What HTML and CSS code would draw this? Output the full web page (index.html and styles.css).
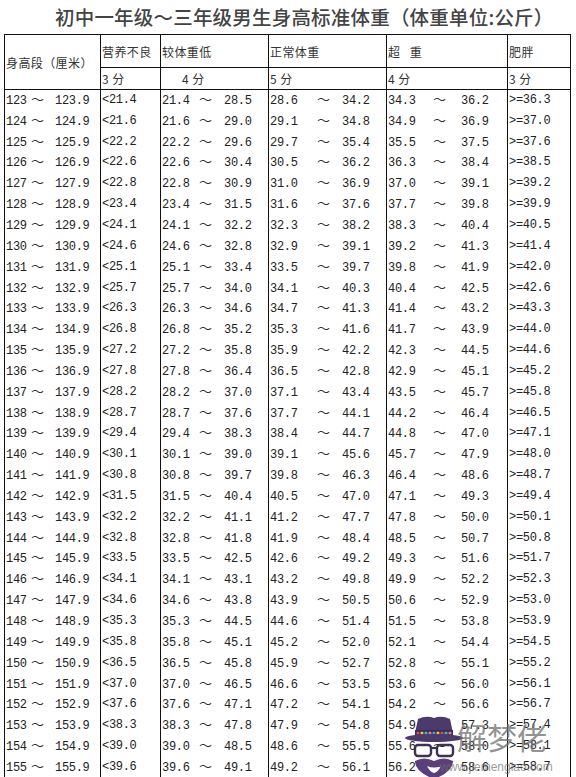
FILE: index.html
```html
<!DOCTYPE html>
<html lang="zh-CN">
<head>
<meta charset="utf-8">
<title>初中一年级～三年级男生身高标准体重</title>
<link rel="stylesheet" href="styles.css">
</head>
<body>
<div class="page">
  <h1 class="title">初中一年级～三年级男生身高标准体重（体重单位:公斤）</h1>
  <table class="chart">
    <colgroup>
      <col class="w1"><col class="w2"><col class="w3"><col class="w4"><col class="w5"><col class="w6">
    </colgroup>
    <thead>
      <tr class="h1">
        <th rowspan="2" class="hd">身高段（厘米）</th>
        <th class="hd">营养不良</th>
        <th class="hd">较体重低</th>
        <th class="hd">正常体重</th>
        <th class="hd">超&nbsp;&nbsp;&nbsp;重</th>
        <th class="hd">肥胖</th>
      </tr>
      <tr class="h2">
        <th class="hd">3 分</th>
        <th class="hd indent">4 分</th>
        <th class="hd">5 分</th>
        <th class="hd">4 分</th>
        <th class="hd">3 分</th>
      </tr>
    </thead>
    <tbody>
      <tr><td class="c1"><span class="a">123</span><span class="t">～</span>123.9</td><td>&lt;21.4</td><td class="c3"><span class="a">21.4</span><span class="t">～</span>28.5</td><td class="c4"><span class="a">28.6</span><span class="t">～</span>34.2</td><td class="c5"><span class="a">34.3</span><span class="t">～</span>36.2</td><td>&gt;=36.3</td></tr>
      <tr><td class="c1"><span class="a">124</span><span class="t">～</span>124.9</td><td>&lt;21.6</td><td class="c3"><span class="a">21.6</span><span class="t">～</span>29.0</td><td class="c4"><span class="a">29.1</span><span class="t">～</span>34.8</td><td class="c5"><span class="a">34.9</span><span class="t">～</span>36.9</td><td>&gt;=37.0</td></tr>
      <tr><td class="c1"><span class="a">125</span><span class="t">～</span>125.9</td><td>&lt;22.2</td><td class="c3"><span class="a">22.2</span><span class="t">～</span>29.6</td><td class="c4"><span class="a">29.7</span><span class="t">～</span>35.4</td><td class="c5"><span class="a">35.5</span><span class="t">～</span>37.5</td><td>&gt;=37.6</td></tr>
      <tr><td class="c1"><span class="a">126</span><span class="t">～</span>126.9</td><td>&lt;22.6</td><td class="c3"><span class="a">22.6</span><span class="t">～</span>30.4</td><td class="c4"><span class="a">30.5</span><span class="t">～</span>36.2</td><td class="c5"><span class="a">36.3</span><span class="t">～</span>38.4</td><td>&gt;=38.5</td></tr>
      <tr><td class="c1"><span class="a">127</span><span class="t">～</span>127.9</td><td>&lt;22.8</td><td class="c3"><span class="a">22.8</span><span class="t">～</span>30.9</td><td class="c4"><span class="a">31.0</span><span class="t">～</span>36.9</td><td class="c5"><span class="a">37.0</span><span class="t">～</span>39.1</td><td>&gt;=39.2</td></tr>
      <tr><td class="c1"><span class="a">128</span><span class="t">～</span>128.9</td><td>&lt;23.4</td><td class="c3"><span class="a">23.4</span><span class="t">～</span>31.5</td><td class="c4"><span class="a">31.6</span><span class="t">～</span>37.6</td><td class="c5"><span class="a">37.7</span><span class="t">～</span>39.8</td><td>&gt;=39.9</td></tr>
      <tr><td class="c1"><span class="a">129</span><span class="t">～</span>129.9</td><td>&lt;24.1</td><td class="c3"><span class="a">24.1</span><span class="t">～</span>32.2</td><td class="c4"><span class="a">32.3</span><span class="t">～</span>38.2</td><td class="c5"><span class="a">38.3</span><span class="t">～</span>40.4</td><td>&gt;=40.5</td></tr>
      <tr><td class="c1"><span class="a">130</span><span class="t">～</span>130.9</td><td>&lt;24.6</td><td class="c3"><span class="a">24.6</span><span class="t">～</span>32.8</td><td class="c4"><span class="a">32.9</span><span class="t">～</span>39.1</td><td class="c5"><span class="a">39.2</span><span class="t">～</span>41.3</td><td>&gt;=41.4</td></tr>
      <tr><td class="c1"><span class="a">131</span><span class="t">～</span>131.9</td><td>&lt;25.1</td><td class="c3"><span class="a">25.1</span><span class="t">～</span>33.4</td><td class="c4"><span class="a">33.5</span><span class="t">～</span>39.7</td><td class="c5"><span class="a">39.8</span><span class="t">～</span>41.9</td><td>&gt;=42.0</td></tr>
      <tr><td class="c1"><span class="a">132</span><span class="t">～</span>132.9</td><td>&lt;25.7</td><td class="c3"><span class="a">25.7</span><span class="t">～</span>34.0</td><td class="c4"><span class="a">34.1</span><span class="t">～</span>40.3</td><td class="c5"><span class="a">40.4</span><span class="t">～</span>42.5</td><td>&gt;=42.6</td></tr>
      <tr><td class="c1"><span class="a">133</span><span class="t">～</span>133.9</td><td>&lt;26.3</td><td class="c3"><span class="a">26.3</span><span class="t">～</span>34.6</td><td class="c4"><span class="a">34.7</span><span class="t">～</span>41.3</td><td class="c5"><span class="a">41.4</span><span class="t">～</span>43.2</td><td>&gt;=43.3</td></tr>
      <tr><td class="c1"><span class="a">134</span><span class="t">～</span>134.9</td><td>&lt;26.8</td><td class="c3"><span class="a">26.8</span><span class="t">～</span>35.2</td><td class="c4"><span class="a">35.3</span><span class="t">～</span>41.6</td><td class="c5"><span class="a">41.7</span><span class="t">～</span>43.9</td><td>&gt;=44.0</td></tr>
      <tr><td class="c1"><span class="a">135</span><span class="t">～</span>135.9</td><td>&lt;27.2</td><td class="c3"><span class="a">27.2</span><span class="t">～</span>35.8</td><td class="c4"><span class="a">35.9</span><span class="t">～</span>42.2</td><td class="c5"><span class="a">42.3</span><span class="t">～</span>44.5</td><td>&gt;=44.6</td></tr>
      <tr><td class="c1"><span class="a">136</span><span class="t">～</span>136.9</td><td>&lt;27.8</td><td class="c3"><span class="a">27.8</span><span class="t">～</span>36.4</td><td class="c4"><span class="a">36.5</span><span class="t">～</span>42.8</td><td class="c5"><span class="a">42.9</span><span class="t">～</span>45.1</td><td>&gt;=45.2</td></tr>
      <tr><td class="c1"><span class="a">137</span><span class="t">～</span>137.9</td><td>&lt;28.2</td><td class="c3"><span class="a">28.2</span><span class="t">～</span>37.0</td><td class="c4"><span class="a">37.1</span><span class="t">～</span>43.4</td><td class="c5"><span class="a">43.5</span><span class="t">～</span>45.7</td><td>&gt;=45.8</td></tr>
      <tr><td class="c1"><span class="a">138</span><span class="t">～</span>138.9</td><td>&lt;28.7</td><td class="c3"><span class="a">28.7</span><span class="t">～</span>37.6</td><td class="c4"><span class="a">37.7</span><span class="t">～</span>44.1</td><td class="c5"><span class="a">44.2</span><span class="t">～</span>46.4</td><td>&gt;=46.5</td></tr>
      <tr><td class="c1"><span class="a">139</span><span class="t">～</span>139.9</td><td>&lt;29.4</td><td class="c3"><span class="a">29.4</span><span class="t">～</span>38.3</td><td class="c4"><span class="a">38.4</span><span class="t">～</span>44.7</td><td class="c5"><span class="a">44.8</span><span class="t">～</span>47.0</td><td>&gt;=47.1</td></tr>
      <tr><td class="c1"><span class="a">140</span><span class="t">～</span>140.9</td><td>&lt;30.1</td><td class="c3"><span class="a">30.1</span><span class="t">～</span>39.0</td><td class="c4"><span class="a">39.1</span><span class="t">～</span>45.6</td><td class="c5"><span class="a">45.7</span><span class="t">～</span>47.9</td><td>&gt;=48.0</td></tr>
      <tr><td class="c1"><span class="a">141</span><span class="t">～</span>141.9</td><td>&lt;30.8</td><td class="c3"><span class="a">30.8</span><span class="t">～</span>39.7</td><td class="c4"><span class="a">39.8</span><span class="t">～</span>46.3</td><td class="c5"><span class="a">46.4</span><span class="t">～</span>48.6</td><td>&gt;=48.7</td></tr>
      <tr><td class="c1"><span class="a">142</span><span class="t">～</span>142.9</td><td>&lt;31.5</td><td class="c3"><span class="a">31.5</span><span class="t">～</span>40.4</td><td class="c4"><span class="a">40.5</span><span class="t">～</span>47.0</td><td class="c5"><span class="a">47.1</span><span class="t">～</span>49.3</td><td>&gt;=49.4</td></tr>
      <tr><td class="c1"><span class="a">143</span><span class="t">～</span>143.9</td><td>&lt;32.2</td><td class="c3"><span class="a">32.2</span><span class="t">～</span>41.1</td><td class="c4"><span class="a">41.2</span><span class="t">～</span>47.7</td><td class="c5"><span class="a">47.8</span><span class="t">～</span>50.0</td><td>&gt;=50.1</td></tr>
      <tr><td class="c1"><span class="a">144</span><span class="t">～</span>144.9</td><td>&lt;32.8</td><td class="c3"><span class="a">32.8</span><span class="t">～</span>41.8</td><td class="c4"><span class="a">41.9</span><span class="t">～</span>48.4</td><td class="c5"><span class="a">48.5</span><span class="t">～</span>50.7</td><td>&gt;=50.8</td></tr>
      <tr><td class="c1"><span class="a">145</span><span class="t">～</span>145.9</td><td>&lt;33.5</td><td class="c3"><span class="a">33.5</span><span class="t">～</span>42.5</td><td class="c4"><span class="a">42.6</span><span class="t">～</span>49.2</td><td class="c5"><span class="a">49.3</span><span class="t">～</span>51.6</td><td>&gt;=51.7</td></tr>
      <tr><td class="c1"><span class="a">146</span><span class="t">～</span>146.9</td><td>&lt;34.1</td><td class="c3"><span class="a">34.1</span><span class="t">～</span>43.1</td><td class="c4"><span class="a">43.2</span><span class="t">～</span>49.8</td><td class="c5"><span class="a">49.9</span><span class="t">～</span>52.2</td><td>&gt;=52.3</td></tr>
      <tr><td class="c1"><span class="a">147</span><span class="t">～</span>147.9</td><td>&lt;34.6</td><td class="c3"><span class="a">34.6</span><span class="t">～</span>43.8</td><td class="c4"><span class="a">43.9</span><span class="t">～</span>50.5</td><td class="c5"><span class="a">50.6</span><span class="t">～</span>52.9</td><td>&gt;=53.0</td></tr>
      <tr><td class="c1"><span class="a">148</span><span class="t">～</span>148.9</td><td>&lt;35.3</td><td class="c3"><span class="a">35.3</span><span class="t">～</span>44.5</td><td class="c4"><span class="a">44.6</span><span class="t">～</span>51.4</td><td class="c5"><span class="a">51.5</span><span class="t">～</span>53.8</td><td>&gt;=53.9</td></tr>
      <tr><td class="c1"><span class="a">149</span><span class="t">～</span>149.9</td><td>&lt;35.8</td><td class="c3"><span class="a">35.8</span><span class="t">～</span>45.1</td><td class="c4"><span class="a">45.2</span><span class="t">～</span>52.0</td><td class="c5"><span class="a">52.1</span><span class="t">～</span>54.4</td><td>&gt;=54.5</td></tr>
      <tr><td class="c1"><span class="a">150</span><span class="t">～</span>150.9</td><td>&lt;36.5</td><td class="c3"><span class="a">36.5</span><span class="t">～</span>45.8</td><td class="c4"><span class="a">45.9</span><span class="t">～</span>52.7</td><td class="c5"><span class="a">52.8</span><span class="t">～</span>55.1</td><td>&gt;=55.2</td></tr>
      <tr><td class="c1"><span class="a">151</span><span class="t">～</span>151.9</td><td>&lt;37.0</td><td class="c3"><span class="a">37.0</span><span class="t">～</span>46.5</td><td class="c4"><span class="a">46.6</span><span class="t">～</span>53.5</td><td class="c5"><span class="a">53.6</span><span class="t">～</span>56.0</td><td>&gt;=56.1</td></tr>
      <tr><td class="c1"><span class="a">152</span><span class="t">～</span>152.9</td><td>&lt;37.6</td><td class="c3"><span class="a">37.6</span><span class="t">～</span>47.1</td><td class="c4"><span class="a">47.2</span><span class="t">～</span>54.1</td><td class="c5"><span class="a">54.2</span><span class="t">～</span>56.6</td><td>&gt;=56.7</td></tr>
      <tr><td class="c1"><span class="a">153</span><span class="t">～</span>153.9</td><td>&lt;38.3</td><td class="c3"><span class="a">38.3</span><span class="t">～</span>47.8</td><td class="c4"><span class="a">47.9</span><span class="t">～</span>54.8</td><td class="c5"><span class="a">54.9</span><span class="t">～</span>57.3</td><td>&gt;=57.4</td></tr>
      <tr><td class="c1"><span class="a">154</span><span class="t">～</span>154.9</td><td>&lt;39.0</td><td class="c3"><span class="a">39.0</span><span class="t">～</span>48.5</td><td class="c4"><span class="a">48.6</span><span class="t">～</span>55.5</td><td class="c5"><span class="a">55.6</span><span class="t">～</span>58.0</td><td>&gt;=58.1</td></tr>
      <tr><td class="c1"><span class="a">155</span><span class="t">～</span>155.9</td><td>&lt;39.6</td><td class="c3"><span class="a">39.6</span><span class="t">～</span>49.1</td><td class="c4"><span class="a">49.2</span><span class="t">～</span>56.1</td><td class="c5"><span class="a">56.2</span><span class="t">～</span>58.6</td><td>&gt;=58.7</td></tr>
    </tbody>
  </table>

  <div class="watermark" aria-label="解梦佬 www.jiemenglao.com">
    <svg class="wm-face" width="62" height="64" viewBox="0 0 62 64">
      <path d="M15 4 Q23 0 31 3 Q39 0 47 4 L50 18 L12 18 Z" fill="#4b3b6c"/>
      <rect x="12" y="15" width="38" height="6" fill="#3a2c55"/>
      <circle cx="15" cy="18" r="1.6" fill="#e0504f"/>
      <circle cx="19" cy="18" r="1.6" fill="#f2c23d"/>
      <circle cx="23" cy="18" r="1.6" fill="#4fb3a9"/>
      <circle cx="27" cy="18" r="1.6" fill="#e07aa8"/>
      <circle cx="31" cy="18" r="1.6" fill="#5a8fd6"/>
      <circle cx="35" cy="18" r="1.6" fill="#f2c23d"/>
      <circle cx="39" cy="18" r="1.6" fill="#e0504f"/>
      <circle cx="43" cy="18" r="1.6" fill="#4fb3a9"/>
      <circle cx="47" cy="18" r="1.6" fill="#e07aa8"/>
      <ellipse cx="31" cy="23" rx="29" ry="4" fill="#4b3b6c"/>
      <rect x="12" y="30" width="16" height="11" rx="3" fill="none" stroke="#3b3352" stroke-width="2.4"/>
      <rect x="34" y="30" width="16" height="11" rx="3" fill="none" stroke="#3b3352" stroke-width="2.4"/>
      <path d="M28 33 L34 33" stroke="#3b3352" stroke-width="2.2"/>
      <path d="M12 46 Q21 41 31 46 Q41 41 50 46 Q50 57 31 64 Q12 57 12 46 Z M24 51 Q31 54 38 51 Q35 57 31 58 Q27 57 24 51 Z" fill="#5a3f7c" fill-rule="evenodd"/>
    </svg>
    <span class="wm-name">解梦佬</span>
    <span class="wm-url">www.jiemenglao.com</span>
  </div>
</div>
</body>
</html>
```
FILE: styles.css
```css
html, body {
  margin: 0;
  padding: 0;
  background: #ffffff;
}

.page {
  position: relative;
  width: 576px;
  height: 777px;
  overflow: hidden;
}

.title {
  margin: 0;
  height: 34px;
  line-height: 34px;
  padding-left: 55px;
  font-family: "Noto Sans CJK SC", sans-serif;
  font-size: 19.5px;
  font-weight: 500;
  color: #444;
  white-space: nowrap;
  letter-spacing: 0.2px;
}

.chart {
  margin-left: 4px;
  border-collapse: collapse;
  table-layout: fixed;
  width: 567px;
  font-family: "Liberation Mono", "Noto Sans CJK SC", monospace;
  font-size: 12px;
  letter-spacing: -0.3px;
  color: #222;
}

.w1 { width: 96px; }
.w2 { width: 60px; }
.w3 { width: 108px; }
.w4 { width: 118px; }
.w5 { width: 121px; }
.w6 { width: 63px; }

.chart th,
.chart td {
  border-left: 1px solid #111;
  border-right: 1px solid #111;
  padding: 0 0 0 1px;
  text-align: left;
  white-space: nowrap;
  overflow: hidden;
}

.chart th {
  border-top: 1px solid #111;
  border-bottom: 1px solid #111;
  font-family: "Noto Sans CJK SC", sans-serif;
  font-weight: 400;
  font-size: 12px;
  letter-spacing: 0.4px;
  color: #333;
}

.h1 { height: 33px; }
.h2 { height: 22px; }

.chart th.indent { padding-left: 21px; }

.chart tbody tr { height: 20.85px; }

.chart td {
  vertical-align: middle;
  line-height: 14px;
}

.a, .t {
  display: inline-block;
}

.t {
  font-family: "Noto Sans CJK SC", sans-serif;
  font-size: 13px;
  letter-spacing: 0;
  color: #333;
}

.c1 .a { width: 25px; }
.c1 .t { width: 24px; }
.c3 .a { width: 37px; }
.c3 .t { width: 25px; }
.c4 .a { width: 47px; }
.c4 .t { width: 25px; }
.c5 .a { width: 45px; }
.c5 .t { width: 28px; }

.watermark {
  position: absolute;
  left: 400px;
  top: 714px;
  width: 176px;
  height: 63px;
}

.wm-face {
  position: absolute;
  left: 3px;
  top: 1px;
}

.wm-name {
  position: absolute;
  left: 57px;
  top: 2px;
  font-family: "Noto Sans CJK SC", sans-serif;
  font-size: 30px;
  line-height: 40px;
  color: rgba(110, 110, 110, 0.75);
  letter-spacing: 0;
}

.wm-url {
  position: absolute;
  left: 40px;
  top: 46px;
  font-family: "Liberation Sans", sans-serif;
  font-size: 12px;
  line-height: 14px;
  color: rgba(110, 110, 110, 0.7);
}
```
